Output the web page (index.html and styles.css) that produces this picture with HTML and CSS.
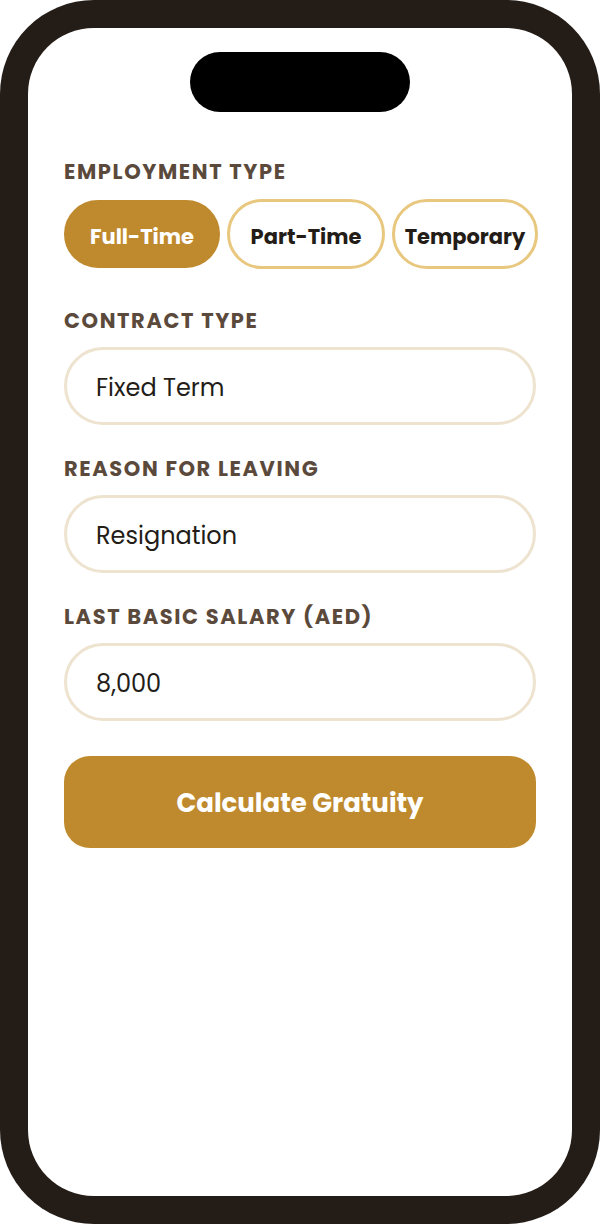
FILE: index.html
```html
<!DOCTYPE html>
<html lang="en">
<head>
    <meta charset="UTF-8">
    <meta name="viewport" content="width=device-width, initial-scale=1.0">
    <title>Gratuity Calculator</title>
    <link rel="stylesheet" href="styles.css">
</head>
<body>

    <!-- 폰 프레임 -->
    <div class="phone">
        <div class="screen">
            <div class="notch"></div>

            <div class="form">
                <!-- 고용 형태 -->
                <div class="field">
                    <div class="label">Employment Type</div>
                    <div class="chips">
                        <button class="chip active">Full-Time</button>
                        <button class="chip">Part-Time</button>
                        <button class="chip">Temporary</button>
                    </div>
                </div>

                <div class="field">
                    <div class="label">Contract Type</div>
                    <div class="input">Fixed Term</div>
                </div>

                <div class="field">
                    <div class="label">Reason for Leaving</div>
                    <div class="input">Resignation</div>
                </div>

                <div class="field">
                    <div class="label">Last Basic Salary (AED)</div>
                    <div class="input">8,000</div>
                </div>

                <button class="calc-button">Calculate Gratuity</button>
            </div>
        </div>
    </div>

</body>
</html>
```

FILE: styles.css
```css
/* 전체 배경 */
body {
    margin: 0;
    padding: 0;
    background: #ffffff;
    font-family: "Poppins", "Inter", "Noto Sans", sans-serif;
    color: #231c17;
}

/* 폰 프레임 */
.phone {
    width: 600px;
    height: 1224px;
    box-sizing: border-box;
    padding: 28px;
    background: #241c17;
    border-radius: 94px;
}

.screen {
    height: 100%;
    background: #ffffff;
    border-radius: 66px;
    padding-top: 24px;
    box-sizing: border-box;
}

.notch {
    width: 220px;
    height: 60px;
    margin: 0 auto;
    background: #000000;
    border-radius: 30px;
}

/* 폼 */
.form {
    padding: 48px 36px 0;
    display: flex;
    flex-direction: column;
}

.field {
    display: flex;
    flex-direction: column;
    gap: 14px;
    margin-bottom: 32px;
}

.field:first-child {
    gap: 15px;
    margin-bottom: 40px;
}

.label {
    font-size: 21px;
    line-height: 24px;
    font-weight: 700;
    letter-spacing: 1.6px;
    text-transform: uppercase;
    color: #5b4a3b;
}

/* 칩 버튼 */
.chips {
    display: flex;
    align-items: center;
    gap: 7px;
}

.chip {
    height: 70px;
    padding: 4px 0 0;
    border: 3px solid #e8c77e;
    border-radius: 35px;
    background: #ffffff;
    color: #231c17;
    font-family: inherit;
    font-size: 21px;
    font-weight: 700;
    cursor: pointer;
}

.chip:first-child {
    flex: 0 0 156px;
    height: 68px;
}

.chip:nth-child(2) {
    flex: 0 0 158px;
}

.chip:nth-child(3) {
    flex: 0 0 146px;
}

.chip.active {
    background: #bf8a2e;
    border-color: #bf8a2e;
    color: #ffffff;
}

/* 입력칸 */
.input {
    height: 78px;
    box-sizing: border-box;
    border: 3px solid #ede3cf;
    border-radius: 39px;
    padding: 2px 29px 0;
    display: flex;
    align-items: center;
    font-size: 24px;
}

/* 계산 버튼 */
.calc-button {
    margin-top: 3px;
    height: 92px;
    padding-top: 4px;
    border: none;
    border-radius: 26px;
    background: #bf8a2e;
    color: #ffffff;
    font-family: inherit;
    font-size: 26px;
    font-weight: 700;
    cursor: pointer;
}
```
